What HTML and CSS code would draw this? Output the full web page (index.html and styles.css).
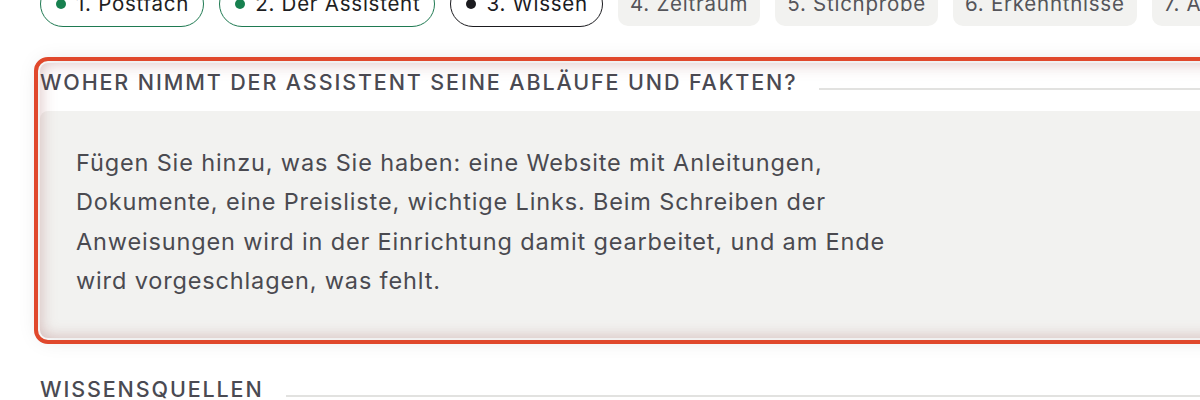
FILE: index.html
```html
<!DOCTYPE html>
<html lang="de">
<head>
<meta charset="utf-8">
<title>Wissen</title>
<link rel="stylesheet" href="styles.css">
</head>
<body>
<div class="page">
  <nav class="steps">
    <span class="step done"><span class="dot"></span>1. Postfach</span>
    <span class="step done"><span class="dot"></span>2. Der Assistent</span>
    <span class="step current"><span class="dot"></span>3. Wissen</span>
    <span class="step todo">4. Zeitraum</span>
    <span class="step todo">5. Stichprobe</span>
    <span class="step todo">6. Erkenntnisse</span>
    <span class="step todo">7. Abschluss</span>
  </nav>

  <section class="block highlight">
    <h2 class="sec-title"><span>Woher nimmt der Assistent seine Abläufe und Fakten?</span></h2>
    <div class="card">
      <p>Fügen Sie hinzu, was Sie haben: eine Website mit Anleitungen, Dokumente, eine Preisliste, wichtige Links. Beim Schreiben der Anweisungen wird in der Einrichtung damit gearbeitet, und am Ende wird vorgeschlagen, was fehlt.</p>
    </div>
  </section>

  <section class="block next">
    <h2 class="sec-title"><span>Wissensquellen</span></h2>
  </section>
</div>
</body>
</html>
```

FILE: styles.css
```css
html, body {
  margin: 0;
  padding: 0;
  background: #ffffff;
  overflow: hidden;
}

body {
  font-family: Inter, "Noto Sans", "Liberation Sans", sans-serif;
  color: #222;
}

.page {
  width: 1260px;
  padding: 0 0 0 40px;
  margin-top: -19px;
}

.steps {
  display: flex;
  align-items: center;
  gap: 15px;
  white-space: nowrap;
}

.step {
  display: inline-flex;
  align-items: center;
  gap: 10px;
  font-size: 20.5px;
  line-height: 24px;
  letter-spacing: 0.75px;
  padding: 10px 14px 10px 15px;
  border-radius: 24px;
}

.step .dot {
  width: 10px;
  height: 10px;
  border-radius: 50%;
  background: currentColor;
}

.step.done {
  border: 1.5px solid #1f7a52;
  color: #1e1e22;
}
.step.done .dot { background: #17804f; }

.step.current {
  border: 1.5px solid #1b1b1f;
  color: #1b1b1f;
}

.step.todo {
  background: #f2f2f0;
  color: #55555a;
  border-radius: 10px;
  padding: 10px 12px;
}

.block {
  margin-top: 36px;
}

.block.next {
  margin-top: 32px;
}

.highlight {
  position: relative;
  border-radius: 8px;
}

.highlight::after {
  content: "";
  position: absolute;
  inset: 0;
  border-radius: 8px;
  outline: 4px solid #e0482c;
  outline-offset: 2px;
  box-shadow: inset 0 0 16px rgba(150, 70, 70, 0.35), 0 0 22px rgba(0, 0, 0, 0.13);
  pointer-events: none;
}

.sec-title {
  display: flex;
  align-items: baseline;
  gap: 22px;
  margin: 0;
  padding-top: 6px;
  font-size: 21.5px;
  line-height: 26px;
  font-weight: 500;
  letter-spacing: 1.88px;
  text-transform: uppercase;
  color: #4a4a52;
}

.sec-title::after {
  content: "";
  flex: 1;
  height: 2px;
  background: #e2e2e0;
}

.card {
  margin-top: 16px;
  background: #f2f2f0;
  border-radius: 8px;
  padding: 32px 36px 38px;
}

.card p {
  margin: 0;
  max-width: 820px;
  font-size: 23.5px;
  line-height: 39.3px;
  letter-spacing: 0.85px;
  color: #4a4a50;
}
```
